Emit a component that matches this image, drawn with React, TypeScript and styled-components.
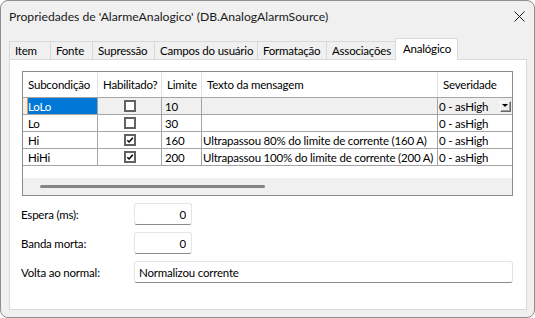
import React from "react";
import styled, { createGlobalStyle } from "styled-components";

const FONT = `Lato, "Noto Sans", "DejaVu Sans", sans-serif`;
const FS = "11.5px";
const LS = "-0.2px";

const Global = createGlobalStyle`
  html, body { margin: 0; padding: 0; background: #ffffff; }
  body { font-family: ${FONT}; font-size: ${FS}; letter-spacing: ${LS}; color: #000; }
  * { box-sizing: border-box; }
`;

const Window = styled.div`
  width: 535px;
  height: 318px;
  border: 1px solid #8f8f8f;
  border-radius: 8px;
  background: #f0f0f0;
  display: flex;
  flex-direction: column;
  overflow: hidden;
`;

const TitleBar = styled.div`
  height: 31px;
  flex: none;
  display: flex;
  align-items: center;
  justify-content: space-between;
  padding: 0 9px 1px 8px;
  color: #1a1a1a;
  white-space: nowrap;
`;

const Title = styled.span`
  font-size: 12.2px;
  letter-spacing: 0;
`;

const CloseIcon = styled.svg`
  width: 11px;
  height: 11px;
  display: block;
`;

const Body = styled.div`
  flex: 1;
  display: flex;
  flex-direction: column;
  padding: 6px 7px 7px 8px;
  min-height: 0;
`;

const TabStrip = styled.div`
  height: 21px;
  flex: none;
  display: flex;
  align-items: flex-end;
`;

const Tab = styled.div<{ $w: number; $active?: boolean }>`
  width: ${(p) => p.$w}px;
  height: ${(p) => (p.$active ? 22 : 18)}px;
  margin-bottom: ${(p) => (p.$active ? -1 : 0)}px;
  margin-left: -1px;
  &:first-child { margin-left: 0; }
  position: relative;
  z-index: ${(p) => (p.$active ? 1 : 0)};
  border: 1px solid #d9d9d9;
  border-bottom: none;
  background: ${(p) => (p.$active ? "#ffffff" : "#f0f0f0")};
  display: flex;
  align-items: center;
  padding-left: ${(p) => (p.$active ? 7 : 5)}px;
  padding-bottom: ${(p) => (p.$active ? 2 : 0)}px;
  white-space: nowrap;
  color: #000;
`;

const Panel = styled.div`
  flex: 1;
  background: #ffffff;
  border: 1px solid #d9d9d9;
  padding: 11px 13px 0 12px;
  display: flex;
  flex-direction: column;
`;

const Grid = styled.div`
  border: 1px solid #8c8c8c;
  background: #ffffff;
  display: flex;
  flex-direction: column;
`;

const COLS = "75px 64px 40px 236px 1fr";

const HeaderRow = styled.div`
  display: grid;
  grid-template-columns: ${COLS};
  height: 26px;
  border-bottom: 1px solid #a5a5a5;
`;

const HeaderCell = styled.div<{ $last?: boolean }>`
  display: flex;
  align-items: center;
  padding-left: 5px;
  border-right: ${(p) => (p.$last ? "none" : "1px solid #e3e3e3")};
  white-space: nowrap;
  overflow: hidden;
`;

const DataRow = styled.div<{ $current?: boolean }>`
  display: grid;
  grid-template-columns: ${COLS};
  height: 17px;
  border-bottom: 1px solid #a5a5a5;
  background: ${(p) => (p.$current ? "#f0f0f0" : "#ffffff")};
`;

const Cell = styled.div<{ $pad?: number; $center?: boolean; $last?: boolean }>`
  display: flex;
  align-items: center;
  justify-content: ${(p) => (p.$center ? "center" : "flex-start")};
  padding-left: ${(p) => p.$pad ?? 2}px;
  border-right: ${(p) => (p.$last ? "none" : "1px solid #a5a5a5")};
  white-space: nowrap;
  overflow: hidden;
  min-width: 0;
`;

const FocusBox = styled.div`
  flex: 1;
  align-self: stretch;
  margin: -1px -1px -1px 4px;
  background: #0078d7;
  border: 1px solid #f59a3d;
  color: #ffffff;
  display: flex;
  align-items: center;
  padding-left: 0;
`;

const SeverityCell = styled(Cell)`
  justify-content: space-between;
  padding-right: 1px;
`;

const DropButton = styled.div`
  width: 11px;
  height: 11px;
  flex: none;
  background: #f0f0f0;
  border: 1px solid;
  border-color: #ffffff #696969 #696969 #ffffff;
  box-shadow: inset -1px -1px 0 #a0a0a0;
  display: flex;
  align-items: center;
  justify-content: center;
  &::after {
    content: "";
    width: 0;
    height: 0;
    border-left: 3px solid transparent;
    border-right: 3px solid transparent;
    border-top: 3px solid #000;
    margin: 0 1px 1px 0;
  }
`;

const CheckBox = styled.div`
  width: 12px;
  height: 12px;
  border: 2px solid #626262;
  background: #ffffff;
  display: flex;
  align-items: center;
  justify-content: center;
`;

const Filler = styled.div`
  height: 12px;
  background: #ffffff;
`;

const ScrollBand = styled.div`
  height: 17px;
  background: #f0f0f0;
  padding: 7px 0 0 17px;
`;

const Thumb = styled.div`
  width: 225px;
  height: 3px;
  border-radius: 1.5px;
  background: #858585;
`;

const FieldRow = styled.div`
  display: grid;
  grid-template-columns: 112px 1fr;
  align-items: center;
  margin-top: 7px;
`;

const Label = styled.span`
  margin-left: -1px;
  white-space: nowrap;
`;

const TextBox = styled.input<{ $w?: number; $right?: boolean }>`
  width: ${(p) => (p.$w ? `${p.$w}px` : "100%")};
  height: 22px;
  margin: 0;
  border: 1px solid #e5e5e5;
  border-bottom-color: #8a8a8a;
  border-radius: 3px;
  background: #ffffff;
  font-family: ${FONT};
  font-size: ${FS};
  letter-spacing: ${LS};
  color: #000;
  padding: 0 ${(p) => (p.$right ? 5 : 4)}px;
  text-align: ${(p) => (p.$right ? "right" : "left")};
  outline: none;
`;

const Check = () => (
  <svg width="8" height="8" viewBox="0 0 8 8">
    <polyline points="1.3,4.2 3.1,6 6.8,1.8" fill="none" stroke="#000" strokeWidth="1.5" />
  </svg>
);

type Row = { sub: string; on: boolean; lim: string; msg: string; sev: string };

const rows: Row[] = [
  { sub: "LoLo", on: false, lim: "10", msg: "", sev: "0 - asHigh" },
  { sub: "Lo", on: false, lim: "30", msg: "", sev: "0 - asHigh" },
  { sub: "Hi", on: true, lim: "160", msg: "Ultrapassou 80% do limite de corrente (160 A)", sev: "0 - asHigh" },
  { sub: "HiHi", on: true, lim: "200", msg: "Ultrapassou 100% do limite de corrente (200 A)", sev: "0 - asHigh" },
];

const tabs: { label: string; w: number; active?: boolean }[] = [
  { label: "Item", w: 42 },
  { label: "Fonte", w: 43 },
  { label: "Supressão", w: 63 },
  { label: "Campos do usuário", w: 104 },
  { label: "Formatação", w: 70 },
  { label: "Associações", w: 70 },
  { label: "Analógico", w: 63, active: true },
];

export default function App() {
  return (
    <>
      <Global />
      <Window>
        <TitleBar>
          <Title>Propriedades de 'AlarmeAnalogico' (DB.AnalogAlarmSource)</Title>
          <CloseIcon viewBox="0 0 11 11">
            <path d="M0.5 0.5 L10.5 10.5 M10.5 0.5 L0.5 10.5" stroke="#1a1a1a" strokeWidth="1" fill="none" />
          </CloseIcon>
        </TitleBar>
        <Body>
          <TabStrip>
            {tabs.map((t) => (
              <Tab key={t.label} $w={t.w} $active={t.active}>
                {t.label}
              </Tab>
            ))}
          </TabStrip>
          <Panel>
            <Grid>
              <HeaderRow>
                <HeaderCell>Subcondição</HeaderCell>
                <HeaderCell>Habilitado?</HeaderCell>
                <HeaderCell>Limite</HeaderCell>
                <HeaderCell>Texto da mensagem</HeaderCell>
                <HeaderCell $last>Severidade</HeaderCell>
              </HeaderRow>
              {rows.map((r, i) => (
                <DataRow key={r.sub} $current={i === 0}>
                  {i === 0 ? (
                    <Cell $pad={0}>
                      <FocusBox>{r.sub}</FocusBox>
                    </Cell>
                  ) : (
                    <Cell $pad={5}>{r.sub}</Cell>
                  )}
                  <Cell $pad={0} $center>
                    <CheckBox>{r.on && <Check />}</CheckBox>
                  </Cell>
                  <Cell $pad={3}>{r.lim}</Cell>
                  <Cell $pad={1}>{r.msg}</Cell>
                  {i === 0 ? (
                    <SeverityCell $pad={1} $last>
                      <span>{r.sev}</span>
                      <DropButton />
                    </SeverityCell>
                  ) : (
                    <Cell $pad={1} $last>
                      {r.sev}
                    </Cell>
                  )}
                </DataRow>
              ))}
              <Filler />
              <ScrollBand>
                <Thumb />
              </ScrollBand>
            </Grid>
            <FieldRow>
              <Label>Espera (ms):</Label>
              <TextBox $w={58} $right readOnly value="0" />
            </FieldRow>
            <FieldRow>
              <Label>Banda morta:</Label>
              <TextBox $w={58} $right readOnly value="0" />
            </FieldRow>
            <FieldRow>
              <Label>Volta ao normal:</Label>
              <TextBox readOnly value="Normalizou corrente" />
            </FieldRow>
          </Panel>
        </Body>
      </Window>
    </>
  );
}
